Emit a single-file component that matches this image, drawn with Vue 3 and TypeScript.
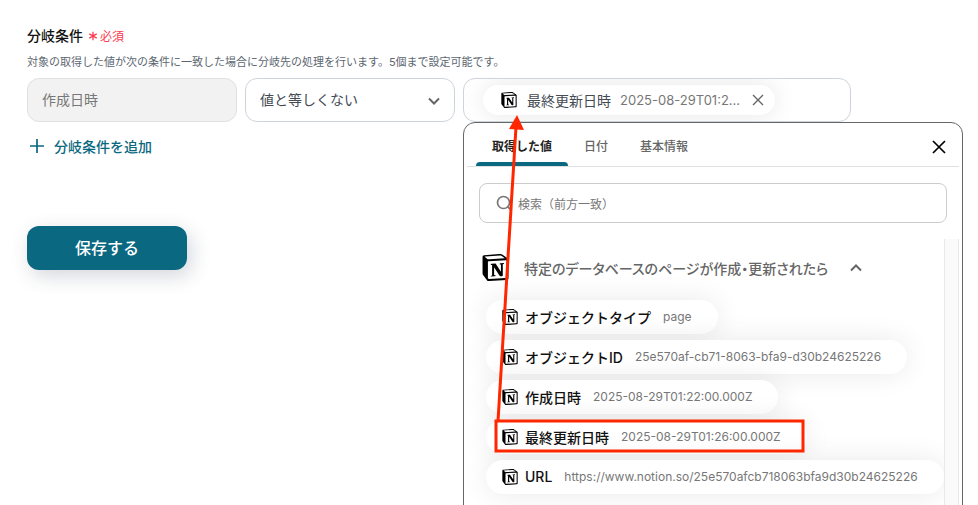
<script setup lang="ts">
import { ref } from 'vue'

interface Item {
  label: string
  value: string
}

const tabs: string[] = ['取得した値', '日付', '基本情報']
const activeTab = ref<string>(tabs[0])
const operator = ref<string>('値と等しくない')
const search = ref<string>('')
const expanded = ref<boolean>(true)

const items: Item[] = [
  { label: 'オブジェクトタイプ', value: 'page' },
  { label: 'オブジェクトID', value: '25e570af-cb71-8063-bfa9-d30b24625226' },
  { label: '作成日時', value: '2025-08-29T01:22:00.000Z' },
  { label: '最終更新日時', value: '2025-08-29T01:26:00.000Z' },
  { label: 'URL', value: 'https://www.notion.so/25e570afcb718063bfa9d30b24625226' },
]

const logo =
  'M4.459 4.208c.746.606 1.026.56 2.428.466l13.215-.793c.28 0 .047-.28-.046-.326L17.86 1.968c-.42-.326-.981-.7-2.055-.607L3.01 2.295c-.466.046-.56.28-.374.466zm.793 3.08v13.904c0 .747.373 1.027 1.214.98l14.523-.84c.841-.046.935-.56.935-1.167V6.354c0-.606-.233-.933-.748-.887l-15.177.887c-.56.047-.747.327-.747.933zm14.337.745c.093.42 0 .84-.42.888l-.7.14v10.264c-.608.327-1.168.514-1.635.514-.748 0-.935-.234-1.495-.933l-4.577-7.186v6.952L12.21 19s0 .84-1.168.84l-3.222.186c-.093-.186 0-.653.327-.746l.84-.233V9.854L7.822 9.76c-.094-.42.14-1.026.793-1.073l3.456-.233 4.764 7.279v-6.44l-1.215-.139c-.093-.514.28-.887.747-.933zM1.936 1.035l13.31-.98c1.634-.14 2.055-.047 3.082.7l4.249 2.986c.7.513.934.653.934 1.213v16.378c0 1.026-.373 1.634-1.68 1.726l-15.458.934c-.98.047-1.448-.093-1.962-.747l-3.129-4.06c-.56-.747-.793-1.306-.793-1.96V2.667c0-.839.374-1.54 1.447-1.632z'
</script>

<template>
  <main class="page">
    <form class="form" @submit.prevent>
      <div class="heading">
        <h2 class="title">分岐条件</h2>
        <span class="required">
          <svg class="star" viewBox="0 0 10 10" aria-hidden="true">
            <path d="M5 .8v8.4M1.3 2.9l7.4 4.2M8.7 2.9L1.3 7.1" />
          </svg>
          必須
        </span>
      </div>
      <p class="description">対象の取得した値が次の条件に一致した場合に分岐先の処理を行います。5個まで設定可能です。</p>

      <div class="row">
        <input class="field" type="text" value="作成日時" aria-label="条件の項目" disabled />
        <div class="select-wrap">
          <select v-model="operator" class="field" aria-label="比較方法">
            <option>値と等しくない</option>
            <option>値と等しい</option>
          </select>
          <svg class="select-arrow" viewBox="0 0 12 12" aria-hidden="true"><path d="M1 3.5l5 5 5-5" /></svg>
        </div>
        <div class="value-wrap">
          <div class="field value-field">
            <div class="selected">
              <svg class="logo" viewBox="0 0 24 24" aria-hidden="true"><path :d="logo" /></svg>
              <span class="selected-label">最終更新日時</span>
              <span class="selected-value">2025-08-29T01:2...</span>
              <button class="icon-button" type="button" aria-label="値を削除">
                <svg class="remove" viewBox="0 0 12 12"><path d="M1 1l10 10M11 1L1 11" /></svg>
              </button>
            </div>
          </div>

          <section class="popover" aria-label="値の選択">
            <div class="popover-head">
              <nav class="tabs" role="tablist">
                <button
                  v-for="tab in tabs"
                  :key="tab"
                  type="button"
                  role="tab"
                  class="tab"
                  :class="{ active: tab === activeTab }"
                  :aria-selected="tab === activeTab"
                  @click="activeTab = tab"
                >
                  {{ tab }}
                </button>
              </nav>
              <button class="icon-button" type="button" aria-label="閉じる">
                <svg class="close" viewBox="0 0 14 14"><path d="M1 1l12 12M13 1L1 13" /></svg>
              </button>
            </div>

            <label class="search">
              <svg class="search-icon" viewBox="0 0 16 16" aria-hidden="true">
                <circle cx="7.5" cy="7.5" r="6" />
                <path d="M11.8 11.8l3 3" />
              </svg>
              <input v-model="search" class="search-input" type="text" aria-label="検索" placeholder="検索（前方一致）" />
            </label>

            <div class="scroll">
              <div class="list">
                <button class="group" type="button" :aria-expanded="expanded" @click="expanded = !expanded">
                  <svg class="logo large" viewBox="0 0 24 24" aria-hidden="true"><path :d="logo" /></svg>
                  <span>特定のデータベースのページが作成・更新されたら</span>
                  <svg class="chevron" viewBox="0 0 12 12" aria-hidden="true"><path d="M1 8.5l5-5 5 5" /></svg>
                </button>
                <ul v-if="expanded" class="items">
                  <li v-for="item in items" :key="item.label">
                    <button class="item" type="button">
                      <svg class="logo" viewBox="0 0 24 24" aria-hidden="true"><path :d="logo" /></svg>
                      <span class="item-label">{{ item.label }}</span>
                      <span class="item-value">{{ item.value }}</span>
                    </button>
                  </li>
                </ul>
              </div>
              <div class="track"></div>
            </div>
          </section>
        </div>
      </div>

      <button class="add" type="button">
        <svg class="plus" viewBox="0 0 14 14" aria-hidden="true"><path d="M7 0v14M0 7h14" /></svg>
        分岐条件を追加
      </button>
      <button class="save" type="submit">保存する</button>
    </form>

    <svg class="annotation" viewBox="0 0 320 344" aria-hidden="true">
      <rect class="outline" x="7" y="308" width="307" height="30" />
      <path class="outline" d="M9 308L27 14" />
      <path class="arrowhead" d="M28 2L35 17L20 16z" />
    </svg>
  </main>
</template>

<style>
body {
  margin: 0;
  background: #fff;
}
</style>

<style scoped>
.page {
  position: relative;
  box-sizing: border-box;
  height: 100vh;
  overflow: hidden;
  padding: 23px 127px 24px 27px;
  color: #111;
  font-family: Inter, "Noto Sans CJK JP", sans-serif;
  font-size: 14px;
}

button,
input,
select {
  font: inherit;
}

button {
  border: 0;
  padding: 0;
  background: none;
  cursor: pointer;
}

svg {
  display: block;
  flex: none;
  fill: none;
  stroke: currentColor;
}

.form {
  display: flex;
  flex-direction: column;
  align-items: flex-start;
}

.heading {
  display: flex;
  align-items: center;
  gap: 5px;
  height: 24px;
}

.title {
  margin: 0;
  font-size: 14px;
  font-weight: 500;
}

.required {
  display: flex;
  align-items: center;
  gap: 2px;
  color: #fa3c50;
  font-size: 12px;
}

.star {
  width: 10px;
  height: 10px;
  margin-top: 2px;
  stroke-width: 1.3;
}

.description {
  margin: 5px 0 6px;
  color: #5c6670;
  font-size: 11px;
  line-height: 20px;
  white-space: nowrap;
}

.row {
  display: grid;
  grid-template-columns: 210px 210px minmax(0, 1fr);
  gap: 8px;
  width: 100%;
}

.field {
  display: block;
  box-sizing: border-box;
  width: 100%;
  height: 44px;
  margin: 0;
  padding: 0 14px 2px;
  border: 1px solid #ced4dc;
  border-radius: 12px;
  background: #fff;
  color: #444b55;
  appearance: none;
}

.field:disabled {
  border-color: #e0e0e0;
  background: #f2f2f2;
  color: #777;
}

.select-wrap,
.value-wrap {
  position: relative;
}

.select-arrow {
  position: absolute;
  top: 17px;
  right: 15px;
  width: 12px;
  height: 12px;
  color: #666;
  stroke-width: 2;
  pointer-events: none;
}

.value-field {
  display: flex;
  align-items: center;
  padding: 0 19px;
  overflow: hidden;
}

.selected {
  display: flex;
  align-items: center;
  height: 30px;
  padding: 0 11px 0 18px;
  border-radius: 15px;
  box-shadow: 0 0 24px rgba(0, 0, 0, 0.1);
}

.selected-label {
  margin: 0 9px 0 10px;
}

.selected-value {
  margin-right: 12px;
  color: #777;
  font-size: 13px;
}

.logo {
  width: 16px;
  height: 16px;
  fill: #000;
  stroke: none;
}

.logo.large {
  width: 27px;
  height: 27px;
}

.remove {
  width: 12px;
  height: 12px;
  color: #666;
  stroke-width: 1.4;
}

.popover {
  position: absolute;
  top: 44px;
  left: 0;
  right: -112px;
  box-sizing: border-box;
  height: 420px;
  padding: 0 3px;
  border: 1px solid #666;
  border-radius: 12px;
  background: #fff;
}

.popover-head {
  display: flex;
  align-items: center;
  justify-content: space-between;
  height: 43px;
  padding: 0 13px 0 9px;
  border-bottom: 1px solid #e0e0e0;
}

.tabs {
  display: flex;
  align-self: stretch;
}

.tab {
  box-sizing: border-box;
  padding: 2px 16px 0;
  border-radius: 4px 4px 0 0;
  color: #666;
  font-size: 12px;
  font-weight: 500;
}

.tab.active {
  position: relative;
  color: #222;
  font-weight: 700;
}

.tab.active::after {
  content: "";
  position: absolute;
  right: 0;
  bottom: 0;
  left: 0;
  height: 4px;
  border-radius: 4px 4px 0 0;
  background: #0b6881;
}

.close {
  width: 14px;
  height: 14px;
  margin-top: 4px;
  color: #000;
  stroke-width: 1.7;
}

.search {
  display: flex;
  align-items: center;
  gap: 6px;
  box-sizing: border-box;
  height: 40px;
  margin: 16px 12px;
  padding: 0 16px;
  border: 1px solid #ccc;
  border-radius: 8px;
}

.search-icon {
  width: 16px;
  height: 16px;
  color: #777;
  stroke-width: 1.7;
}

.search-input {
  flex: 1;
  min-width: 0;
  padding: 2px 0 0;
  border: 0;
  outline: 0;
  background: none;
  font-size: 12px;
}

.search-input::placeholder {
  color: #777;
}

.scroll {
  display: flex;
  height: 303px;
}

.list {
  flex: 1;
  min-width: 0;
  padding: 14px 0 0 15px;
  overflow: hidden;
}

.group {
  display: flex;
  align-items: center;
  height: 29px;
  color: #666;
  font-weight: 500;
  white-space: nowrap;
  font-feature-settings: "palt";
}

.group span {
  margin: 0 22px 0 15px;
}

.chevron {
  width: 12px;
  height: 12px;
  stroke-width: 2;
}

.items {
  display: grid;
  gap: 6px;
  margin: 0;
  padding: 18px 0 0 4px;
  list-style: none;
}

.item {
  display: flex;
  align-items: center;
  height: 34px;
  padding: 0 26px 1px 16px;
  border-radius: 17px;
  background: #fff;
  box-shadow: 0 0 28px rgba(0, 0, 0, 0.09);
  white-space: nowrap;
}

.item-label {
  margin: 0 12px 0 7px;
  color: #111;
  font-weight: 500;
}

.item-value {
  color: #777;
  font-size: 12px;
}

.track {
  box-sizing: border-box;
  width: 15px;
  border: solid #e8e8e8;
  border-width: 0 1px;
  background: #fafafa;
}

.add {
  display: flex;
  align-items: center;
  gap: 10px;
  height: 24px;
  margin: 12px 0 0 3px;
  color: #0b6881;
  font-weight: 500;
}

.plus {
  width: 14px;
  height: 14px;
  stroke-width: 1.7;
}

.save {
  width: 160px;
  height: 44px;
  margin-top: 68px;
  padding-bottom: 2px;
  border-radius: 12px;
  background: #0b6881;
  box-shadow: 4px 6px 20px rgba(40, 50, 80, 0.2);
  color: #fff;
  font-size: 16px;
  font-weight: 500;
}

.annotation {
  position: absolute;
  top: 113px;
  left: 489px;
  width: 320px;
  height: 344px;
  pointer-events: none;
}

.outline {
  stroke: #ff2600;
  stroke-width: 3;
}

.arrowhead {
  fill: #ff2600;
  stroke: none;
}
</style>
